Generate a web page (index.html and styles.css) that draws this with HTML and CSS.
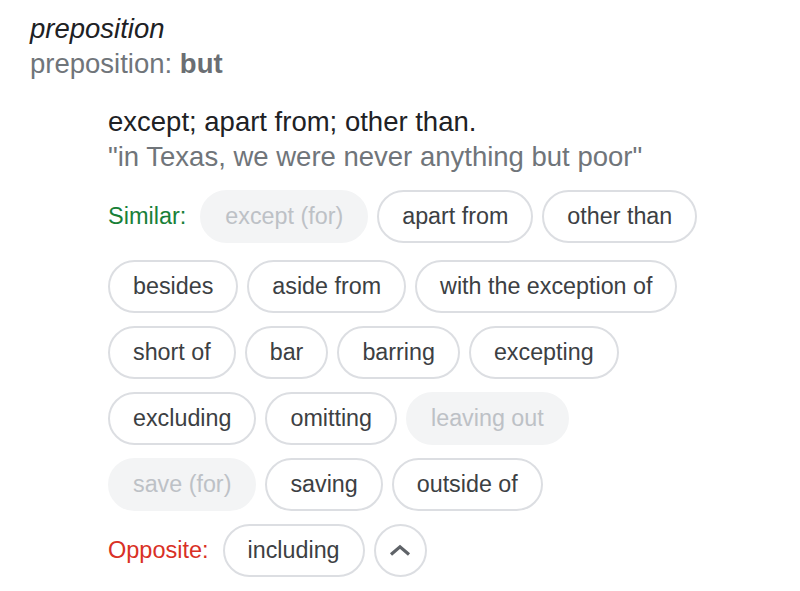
FILE: index.html
```html
<!DOCTYPE html>
<html lang="en">
<head>
<meta charset="utf-8">
<title>but — preposition</title>
<link rel="stylesheet" href="styles.css">
</head>
<body>
<main class="entry">
  <div class="pos">preposition</div>
  <div class="lemma">preposition: <b>but</b></div>
  <section class="sense">
    <div class="definition">except; apart from; other than.</div>
    <div class="example">"in Texas, we were never anything but poor"</div>
    <div class="rel-row">
      <span class="rel-label similar">Similar:</span>
      <span class="chip muted">except (for)</span>
      <span class="chip">apart from</span>
      <span class="chip">other than</span>
      <span class="chip">besides</span>
      <span class="chip">aside from</span>
      <span class="chip">with the exception of</span>
      <span class="chip">short of</span>
      <span class="chip">bar</span>
      <span class="chip">barring</span>
      <span class="chip">excepting</span>
      <span class="chip">excluding</span>
      <span class="chip">omitting</span>
      <span class="chip muted">leaving out</span>
      <span class="chip muted">save (for)</span>
      <span class="chip">saving</span>
      <span class="chip">outside of</span>
    </div>
    <div class="rel-row opposite-row">
      <span class="rel-label opposite">Opposite:</span>
      <span class="chip">including</span>
      <button class="chip round" aria-label="Show less">
        <svg width="22" height="12" viewBox="0 0 22 12"><polyline points="2,10.5 11,2.8 20,10.5" fill="none" stroke="#5f6368" stroke-width="3.2"/></svg>
      </button>
    </div>
  </section>
</main>
</body>
</html>
```
FILE: styles.css
```css
html, body {
  margin: 0;
  padding: 0;
  background: #fff;
}
body {
  font-family: "Liberation Sans", Arial, Helvetica, sans-serif;
}
.entry {
  padding: 11px 80px 0 30px;
}
.pos {
  font-style: italic;
  font-size: 27.5px;
  line-height: 35px;
  color: #202124;
}
.lemma {
  font-size: 27.5px;
  line-height: 35px;
  color: #70757a;
}
.lemma b {
  font-weight: bold;
  color: #6a6e73;
}
.sense {
  margin: 23px 0 0 78px;
}
.definition {
  font-size: 27.5px;
  line-height: 35px;
  color: #202124;
}
.example {
  font-size: 27.5px;
  line-height: 35px;
  color: #70757a;
}
.rel-row {
  display: flex;
  flex-wrap: wrap;
  align-items: center;
  column-gap: 9px;
  row-gap: 13px;
  margin-top: 12px;
}
.opposite-row {
  margin-top: 9px;
}
.rel-label {
  font-size: 23.5px;
  line-height: 53px;
  padding: 4px 5px 4px 0;
}
.similar { color: #188038; }
.opposite { color: #d93025; }
.chip {
  box-sizing: border-box;
  height: 53px;
  display: inline-flex;
  align-items: center;
  padding: 0 23px;
  border: 2px solid #dcdee2;
  border-radius: 27px;
  font-size: 23.3px;
  color: #3c4043;
  background: #fff;
  white-space: nowrap;
}
.chip.muted {
  border-color: #f3f4f5;
  background: #f3f4f5;
  color: #bdc1c6;
}
.chip.round {
  width: 53px;
  padding: 0;
  justify-content: center;
  font: inherit;
  cursor: pointer;
}
.chip.round svg {
  display: block;
  margin-top: -2px;
}
```
